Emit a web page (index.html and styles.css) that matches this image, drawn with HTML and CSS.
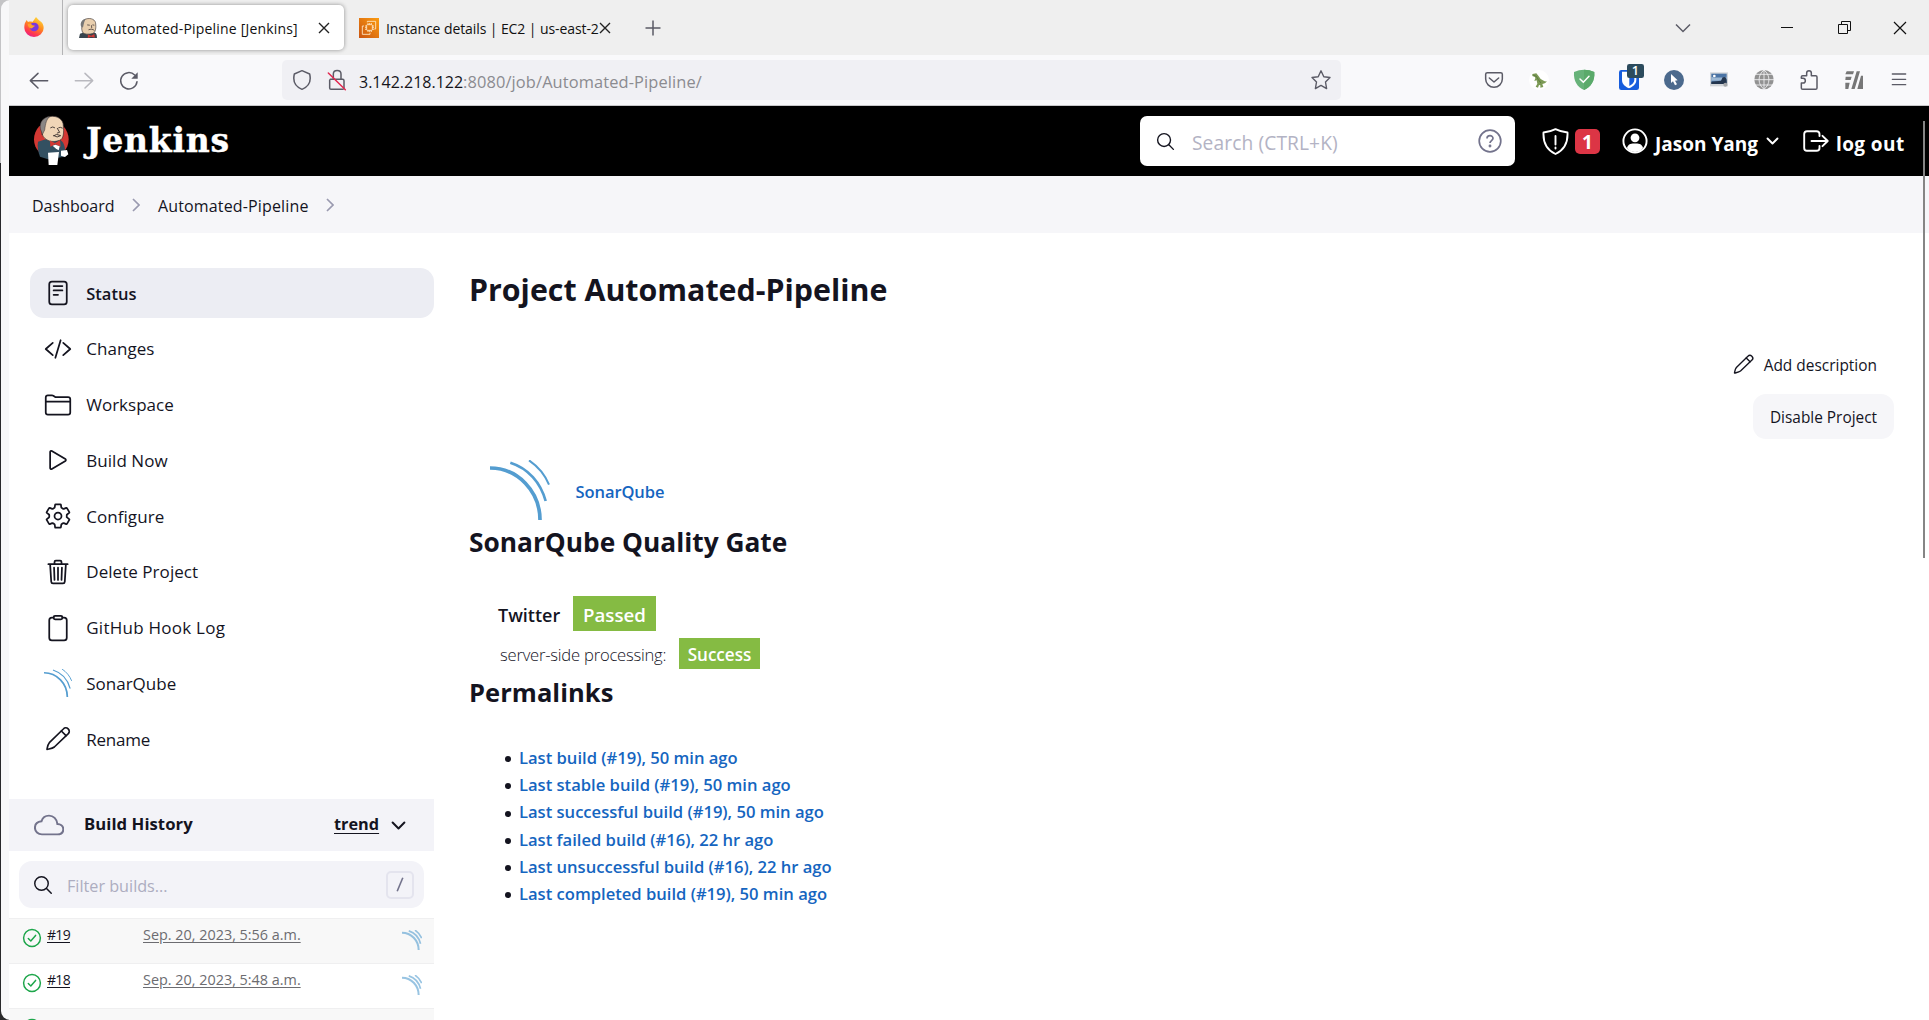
FILE: index.html
```html
<!DOCTYPE html>
<html lang="en">
<head>
<meta charset="utf-8">
<title>Automated-Pipeline [Jenkins]</title>
<link rel="stylesheet" href="styles.css">
</head>
<body>
<svg class="defs" aria-hidden="true">
  <symbol id="sonar" viewBox="120 660 180 180">
    <g fill="none" stroke="#549dd0"><path stroke-width="11" d="M120 684A150 156 0 0 1 270 840"/><path stroke-width="8" d="M181 668C235 685 272 728 287 783"/><path stroke-width="6" d="M237 661C265 680 285 704 297 734"/></g>
  </symbol>
  <symbol id="sonar-small" viewBox="120 660 180 180">
    <g fill="none" stroke="#549dd0" stroke-width="18"><path d="M120 684A150 156 0 0 1 270 840"/><path stroke-width="15" d="M181 668C235 685 272 728 287 783"/><path stroke-width="14" d="M237 661C265 680 285 704 297 734"/></g>
  </symbol>
  <symbol id="pencil" viewBox="131 645 84 84">
    <g fill="none" stroke="currentColor" stroke-width="5" stroke-linejoin="round" stroke-linecap="round"><path d="M140 718C142 708 142 704 147 698L189 657A10 10 0 0 1 204 671L162 711C156 716 150 716 140 718Z"/><path d="M183 663L197 677"/></g>
  </symbol>
  <symbol id="ok" viewBox="0 0 20 20">
    <g fill="none" stroke="#1ea64b" stroke-width="1.5" stroke-linecap="round" stroke-linejoin="round"><circle cx="10" cy="10" r="8.4"/><path d="M6.3 10.5L8.8 13L13.6 7.4"/></g>
  </symbol>
  <symbol id="search" viewBox="0 0 512 512">
    <g fill="none" stroke="currentColor" stroke-width="34" stroke-linecap="round"><circle cx="221" cy="221" r="157"/><path d="M338 338L448 448"/></g>
  </symbol>
</svg>

<div class="window">
  <div class="tabstrip">
    <div class="pinned">
      <svg width="20" height="20" viewBox="71 50 60 60">
        <defs><linearGradient id="fx" x1=".8" y1="0" x2=".3" y2="1"><stop offset="0" stop-color="#ffe23f"/><stop offset=".45" stop-color="#ff8a1e"/><stop offset=".8" stop-color="#ff3750"/><stop offset="1" stop-color="#e5208b"/></linearGradient></defs>
        <path fill="url(#fx)" d="M73 71C74 67 76 65 79 59L83 65C89 63 93 64 96 65C101 59 103 56 107 50C113 57 116 60 122 64C128 69 130 76 130 83A29 27 0 0 1 72 83C72 79 72 75 73 71Z"/>
        <path fill="#7b38dd" d="M88 78C88 72 93 67 101 67C110 67 115 73 115 80S108 93 101 93S88 87 88 78Z"/>
        <path fill="#ffa02a" d="M82 72C89 69 93 71 96 75L104 76C102 80 97 80 95 84C88 85 83 80 82 72Z"/>
      </svg>
    </div>
    <div class="tab tab-active">
      <svg width="18" height="20" viewBox="237 53 55 61">
        <path fill="#38444d" d="M237 114L240 101C248 98 256 97 262 98L283 97C289 98 292 102 292 114Z"/>
        <path fill="#e9cfae" stroke="#443a38" stroke-width="2" d="M248 97C243 86 244 63 258 56C275 51 288 59 288 71C289 80 289 95 280 100C266 104 254 103 248 97Z"/>
        <path fill="#777" d="M243 78C240 65 247 57 258 55C253 62 252 70 249 83Z"/>
        <path fill="none" stroke="#443a38" stroke-width="2.4" d="M262 74L270 75M278 74L284 75M275 75L276 84M266 89C272 86 280 87 284 91"/>
        <path fill="#d33833" d="M264 103L274 107L284 102L285 113L274 110L264 114Z"/>
      </svg>
      <span class="tab-title">Automated-Pipeline [Jenkins]</span>
      <svg class="tab-x" width="12" height="12" viewBox="0 0 12 12"><path d="M1 1L11 11M11 1L1 11"/></svg>
    </div>
    <div class="tab tab-second">
      <svg width="20" height="20" viewBox="0 0 60 60"><defs><linearGradient id="aws" x1="0" y1="1" x2="1" y2="0"><stop offset="0" stop-color="#cb5511"/><stop offset="1" stop-color="#fb9b10"/></linearGradient></defs><rect width="60" height="60" fill="url(#aws)"/><g fill="none" stroke="#ffe9c9" stroke-width="2.6"><rect x="23" y="20" width="17" height="17" rx="2"/><path d="M25 13V10H50V33H46M15 24H10V49H33V44M27 15V20M32 15V20M37 15V20M27 37V42M32 37V42M37 37V42M18 24H23M18 29H23M18 34H23M40 24H45M40 29H45M40 34H45"/></g></svg>
      <span class="tab-title">Instance details | EC2 | us-east-2</span>
      <svg class="tab-x" width="12" height="12" viewBox="0 0 12 12"><path d="M1 1L11 11M11 1L1 11"/></svg>
    </div>
    <svg class="new-tab" width="16" height="16" viewBox="0 0 16 16"><path d="M8 .5V15.5M.5 8H15.5"/></svg>
    <div class="window-buttons">
      <svg width="16" height="10" viewBox="0 0 16 10"><path stroke="#5b5b66" stroke-width="1.5" d="M1 1.5L8 8.5L15 1.5"/></svg>
      <svg width="12" height="12" viewBox="0 0 12 12"><path d="M0 5.5H12"/></svg>
      <svg width="13" height="13" viewBox="0 0 13 13"><path d="M.5 3.5H9.5V12.5H.5ZM3.5 3.5V.5H12.5V9.5H9.5"/></svg>
      <svg width="14" height="14" viewBox="0 0 14 14"><path stroke-width="1.2" d="M1 1L13 13M13 1L1 13"/></svg>
    </div>
  </div>

  <div class="toolbar">
    <div class="nav">
      <svg viewBox="51 195 135 90"><path d="M143 242H92M114 220L91 242L114 264"/></svg>
      <svg viewBox="186 195 135 90" class="dim"><path d="M226 242H277M255 220L278 242L255 264"/></svg>
      <svg viewBox="321 195 135 90"><path d="M411 245A24.500 24.500 0 1 1 404 225"/><path fill="#5b5b66" stroke="none" d="M413 217V236H394Z"/></svg>
    </div>
    <div class="urlbar">
      <svg width="20" height="22" viewBox="876 207 60 66"><path d="M906 212L929 222C934 243 926 260 906 268C886 260 878 243 883 222Z"/></svg>
      <svg width="20" height="22" viewBox="982 207 60 66"><path d="M1001 238V222C1001 208 1024 208 1024 222V238M992 238H1029Q1033 238 1033 242V264Q1033 268 1029 268H994Q990 268 990 264V240"/><path stroke="#e22850" stroke-width="4.500" d="M986 219L1037 269"/></svg>
      <div class="url"><span class="host">3.142.218.122</span><span class="path">:8080/job/Automated-Pipeline/</span></div>
      <svg class="star" width="22" height="22" viewBox="0 0 22 22"><path stroke-width="1.400" d="M11 1.800L13.800 7.700L20 8.500L15.500 13L16.600 19.600L11 16.400L5.400 19.600L6.500 13L2 8.500L8.200 7.700Z"/></svg>
    </div>
    <div class="extensions">
      <svg viewBox="36 30 135 90"><path d="M82 53H122Q127 53 127 58V72A25 25 0 0 1 77 72V58Q77 53 82 53ZM88 69L102 81L116 69"/></svg>
      <svg viewBox="170 30 135 90"><circle cx="236" cy="75" r="30" fill="#fff" stroke="none"/><path fill="#7c9a55" stroke="none" d="M216 57L228 55L234 62L241 72C247 75 252 80 260 79C254 86 248 87 246 87L249 96L240 98L240 91L236 90L233 98L226 95L231 86L229 76L222 78L225 70L224 66L216 63Z"/><path stroke="#4d6b35" stroke-width="2" d="M220 61L228 64L234 74L241 83"/></svg>
      <svg viewBox="305 30 135 90"><path fill="#67b279" stroke="none" d="M341 51Q371 38 402 51C404 78 391 97 371 105C351 97 339 78 341 51Z"/><path fill="#5aaa6a" stroke="none" d="M371 44Q388 44 402 51C404 78 391 97 371 105Z"/><path stroke="#fff" stroke-width="4.500" d="M359 72L369 82L386 64"/></svg>
      <svg viewBox="441 30 135 90"><rect x="477" y="45" width="60" height="60" rx="7" fill="#175ddc" stroke="none"/><path fill="#fff" stroke="none" d="M486 50H529V75C529 88 518 95 507 100C496 95 486 88 486 75Z"/><path fill="#175ddc" stroke="none" d="M508 56H523V75C523 83 516 89 508 93Z"/><rect x="501" y="27" width="51" height="42" rx="7" fill="#2c4b5d" stroke="none"/><text x="526" y="60" class="ext-badge">1</text></svg>
      <svg viewBox="576 30 135 90"><circle cx="642" cy="75" r="30" fill="#4c6a8d" stroke="none"/><path fill="#fff" stroke="none" d="M633 57V84L639 79L645 91L651 88L645 77L653 76Z"/></svg>
      <svg viewBox="710 30 135 90"><path fill="#d2d5d8" stroke="none" d="M749 52H803V94H749Z"/><path fill="#4b74a5" stroke="none" d="M753 56H799V87H753Z"/><path fill="#9db8d3" stroke="none" d="M753 66Q775 70 799 65V77H753Z"/><path fill="#24364e" stroke="none" d="M753 80L782 77L787 67L795 66L799 74V87H753Z"/><circle cx="762" cy="63" r="4" fill="#fff" stroke="none"/><circle cx="795" cy="89" r="6" fill="#a5a7aa" stroke="none"/></svg>
      <svg viewBox="845 30 135 90"><circle cx="911" cy="74" r="29" fill="#929292" stroke="none"/><path stroke="#f3f3f5" stroke-width="2.500" d="M911 45V103M882 74H940M888 58H934M888 90H934M911 45C891 60 891 88 911 103M911 45C931 60 931 88 911 103"/></svg>
      <svg viewBox="983 30 135 90"><path d="M1026 98V84H1031A7 7 0 0 0 1031 70H1026V66Q1026 62 1030 62H1042V54A7 7 0 0 1 1056 54V62H1069Q1073 62 1073 66V99Q1073 103 1069 103H1030Q1026 103 1026 99Z"/></svg>
      <svg viewBox="1116 30 135 90"><path fill="#777" stroke="none" d="M1160 49H1182L1179 58H1156ZM1157 65H1175L1172 75H1156ZM1156 83H1169L1165 102H1156ZM1190 49H1200L1184 102H1174ZM1203 62H1209V102H1192Z"/></svg>
      <svg viewBox="1251 30 135 90"><path stroke-width="4" d="M1297 57H1337M1297 73H1337M1297 89H1337"/></svg>
    </div>
  </div>

  <header class="header">
    <svg width="37" height="52" viewBox="98 345 111 156">
      <ellipse cx="153" cy="418" rx="52" ry="54" fill="#d33833"/>
      <path fill="#335061" d="M113 425L138 417L180 420C194 428 196 450 193 470L143 478L119 470C114 456 110 440 113 425Z"/>
      <path fill="#fff" d="M143 458L176 456L171 495L145 495ZM182 452L200 450L204 463L194 471L182 467Z"/>
      <path fill="#f0d6b7" stroke="#3b3030" stroke-width="2" d="M126 404C118 380 125 355 148 350C172 345 190 360 189 378C191 397 190 417 178 421C157 429 133 423 126 404Z"/>
      <path fill="#8a8785" stroke="#3b3030" stroke-width="1.500" d="M120 386C117 366 129 352 149 349C138 358 136 369 133 390L127 402Z"/>
      <path fill="none" stroke="#2b2424" stroke-width="2.500" d="M151 383Q157 378 163 383M175 383Q180 380 186 384M171 385L178 397L171 399M160 407Q168 399 181 407Q171 415 160 407"/>
      <path fill="#d33833" d="M149 422L164 429L179 421L181 440L165 433L150 440Z"/>
      <path fill="#fff" d="M157 437L165 434L178 439L175 451L167 446Z"/>
    </svg>
    <span class="brand">Jenkins</span>
    <div class="search-box">
      <svg width="21" height="21"><use href="#search"/></svg>
      <span>Search (CTRL+K)</span>
      <svg width="24" height="24" viewBox="0 0 24 24" class="help"><circle cx="12" cy="12" r="10.800"/><path d="M9 9.500C9 5.800 15 5.800 15 9.300C15 11.500 12 11.700 12 14"/><circle cx="12" cy="17" r=".6"/></svg>
    </div>
    <svg class="warn" width="27" height="27" viewBox="0 0 27 27"><path d="M13.500 1.200Q19 4 25.500 4.500C26 15 22 22 13.500 26C5 22 1 15 1.500 4.500Q8 4 13.500 1.200ZM13.500 8V16.500M13.500 19.500V20.500"/></svg>
    <span class="count">1</span>
    <svg class="person" width="26" height="26" viewBox="0 0 26 26"><circle cx="13" cy="13" r="11.600"/><circle cx="13" cy="9.800" r="4.400" fill="#fff" stroke="none"/><path fill="#fff" stroke="none" d="M5 20C6 15.500 10 15.500 13 15.500S20 15.500 21 20Q18 24 13 24T5 20Z"/></svg>
    <span class="user">Jason Yang</span>
    <svg class="caret" width="13" height="8" viewBox="0 0 13 8"><path d="M1.500 1.500L6.500 6.500L11.500 1.500"/></svg>
    <svg class="exit" width="26" height="22" viewBox="0 0 26 22"><path d="M16.500 6V4Q16.500 1.200 13.500 1.200H4Q1.200 1.200 1.200 4V18Q1.200 20.800 4 20.800H13.500Q16.500 20.800 16.500 18V16M8.500 11H24.500M19.500 5.800L24.700 11L19.500 16.200"/></svg>
    <span class="logout">log out</span>
  </header>

  <nav class="crumbs">
    <span class="c1">Dashboard</span>
    <svg width="8" height="14" viewBox="0 0 8 14"><path d="M1 1L7 7L1 13"/></svg>
    <span class="c2">Automated-Pipeline</span>
    <svg width="8" height="14" viewBox="0 0 8 14"><path d="M1 1L7 7L1 13"/></svg>
  </nav>

  <div class="page">
    <aside class="side">
      <ul class="tasks">
        <li class="current"><svg viewBox="0 0 512 512"><rect x="96" y="48" width="320" height="416" rx="48"/><path d="M176 128H336M176 208H336M176 288H256"/></svg>Status</li>
        <li><svg viewBox="0 0 512 512"><path d="M160 368L32 256l128-112M352 368l128-112-128-112M304 96l-96 320"/></svg>Changes</li>
        <li class="tight"><svg viewBox="0 0 512 512"><path d="M440 432H72a40 40 0 01-40-40V120a40 40 0 0140-40h75.890a40 40 0 0122.190 6.720l27.840 18.560a40 40 0 0022.190 6.720H440a40 40 0 0140 40v240a40 40 0 01-40 40zM32 192h448"/></svg>Workspace</li>
        <li><svg viewBox="0 0 512 512"><path d="M112 111v290c0 17.440 17 28.520 31 20.160l247.900-148.370c12.120-7.250 12.120-26.330 0-33.580L143 90.840c-14-8.360-31 2.720-31 20.160z"/></svg>Build Now</li>
        <li><svg viewBox="0 0 512 512"><circle cx="256" cy="256" r="64"/><path d="M416.390 256a154.340 154.340 0 01-1.530 20.790l45.210 35.460a10.810 10.810 0 012.450 13.750l-42.770 74a10.810 10.810 0 01-13.140 4.590l-44.900-18.080a16.110 16.110 0 00-15.170 1.750A164.480 164.480 0 01325 400.800a15.940 15.940 0 00-8.820 12.140l-6.730 47.890a11.080 11.080 0 01-10.680 9.170h-85.540a11.110 11.110 0 01-10.690-8.870l-6.720-47.820a16.070 16.070 0 00-9-12.220 155.300 155.300 0 01-21.460-12.570 16 16 0 00-15.110-1.710l-44.890 18.070a10.810 10.810 0 01-13.140-4.580l-42.770-74a10.800 10.800 0 012.450-13.750l38.210-30a16.050 16.050 0 006-14.080c-.36-4.170-.58-8.330-.58-12.500s.21-8.270.58-12.350a16 16 0 00-6.070-13.940l-38.190-30A10.810 10.810 0 0149.480 186l42.770-74a10.810 10.810 0 0113.140-4.590l44.900 18.080a16.110 16.110 0 0015.170-1.750A164.480 164.480 0 01187 111.200a15.940 15.940 0 008.820-12.140l6.730-47.890A11.080 11.080 0 01213.230 42h85.540a11.110 11.110 0 0110.690 8.870l6.720 47.820a16.070 16.070 0 009 12.220 155.300 155.300 0 0121.460 12.570 16 16 0 0015.110 1.710l44.890-18.070a10.810 10.810 0 0113.140 4.580l42.770 74a10.800 10.800 0 01-2.450 13.750l-38.210 30a16.050 16.050 0 00-6.050 14.080c.33 4.140.55 8.300.55 12.470z"/></svg>Configure</li>
        <li><svg viewBox="0 0 512 512"><path d="M112 112l20 320c.95 18.490 14.400 32 32 32h184c17.670 0 30.870-13.510 32-32l20-320M80 112h352M192 112V72a24 24 0 0124-24h80a24 24 0 0124 24v40M256 176v224M184 176l8 224M328 176l-8 224"/></svg>Delete Project</li>
        <li class="wide"><svg viewBox="0 0 512 512"><path d="M336 64h32a48 48 0 0148 48v320a48 48 0 01-48 48H144a48 48 0 01-48-48V112a48 48 0 0148-48h32"/><rect x="176" y="32" width="160" height="64" rx="26"/></svg>GitHub Hook Log</li>
        <li class="tight"><svg><use href="#sonar"/></svg>SonarQube</li>
        <li class="tighter"><svg><use href="#pencil"/></svg>Rename</li>
      </ul>
      <div class="history-head">
        <svg width="30" height="30" viewBox="0 0 512 512"><path fill="none" stroke="#73738c" stroke-width="34" d="M400 240c-8.890-89.540-71-144-144-144-69 0-113.440 48.200-128 96-60 6-112 43.590-112 112 0 66 54 112 120 112h260c55 0 104-27.460 104-88 0-59.820-53-85.760-100-88z"/></svg>
        <span class="history-title">Build History</span>
        <a class="trend">trend</a>
        <svg width="21" height="21" viewBox="0 0 512 512"><path fill="none" stroke="#14141f" stroke-width="48" stroke-linecap="round" stroke-linejoin="round" d="M112 184l144 144 144-144"/></svg>
      </div>
      <div class="filter">
        <svg width="22" height="22"><use href="#search"/></svg>
        <span>Filter builds...</span>
        <kbd><svg width="8" height="15" viewBox="0 0 8 15"><path stroke="#73738c" stroke-width="1.600" d="M6.800 .7L1.200 14.300"/></svg></kbd>
      </div>
      <div class="build odd"><svg width="20" height="20"><use href="#ok"/></svg><a class="num">#19</a><a class="date">Sep. 20, 2023, 5:56 a.m.</a><svg class="mini" width="20" height="20"><use href="#sonar-small"/></svg></div>
      <div class="build"><svg width="20" height="20"><use href="#ok"/></svg><a class="num">#18</a><a class="date">Sep. 20, 2023, 5:48 a.m.</a><svg class="mini" width="20" height="20"><use href="#sonar-small"/></svg></div>
      <div class="build odd"><svg width="20" height="20"><use href="#ok"/></svg></div>
    </aside>

    <main class="main">
      <h1>Project Automated-Pipeline</h1>
      <div class="actions">
        <div class="describe"><svg width="23" height="23"><use href="#pencil"/></svg>Add description</div>
        <button class="disable">Disable Project</button>
      </div>
      <div class="sonar-row"><svg width="60" height="60"><use href="#sonar"/></svg><a>SonarQube</a></div>
      <h2>SonarQube Quality Gate</h2>
      <div class="gate"><span class="gate-name">Twitter</span><span class="pill">Passed</span></div>
      <div class="server"><span class="server-name">server-side processing:</span><span class="pill">Success</span></div>
      <h2 class="perma">Permalinks</h2>
      <ul class="links">
        <li><a>Last build (#19), 50 min ago</a></li>
        <li><a>Last stable build (#19), 50 min ago</a></li>
        <li><a>Last successful build (#19), 50 min ago</a></li>
        <li><a>Last failed build (#16), 22 hr ago</a></li>
        <li><a>Last unsuccessful build (#16), 22 hr ago</a></li>
        <li><a>Last completed build (#19), 50 min ago</a></li>
      </ul>
    </main>
  </div>
  <div class="scrollbar"></div>
</div>
</body>
</html>
```
FILE: styles.css
```css
* { box-sizing: border-box; }
body {
  margin: 0; height: 1020px; overflow: hidden; padding-left: 1px;
  background: linear-gradient(#c4c4c6 163px, #29292b 163px);
  font-family: "Open Sans", "Noto Sans", sans-serif; color: #14141f;
}
svg { flex: none; display: block; }
ul { list-style: none; margin: 0; padding: 0; }
.defs { display: none; }
.window {
  position: relative; display: flex; flex-direction: column; height: 1020px; overflow: hidden;
  padding-left: 8px; background: #f8f8f9; border-radius: 9px 0 0 9px;
}

/* Browser tabs */
.tabstrip { display: flex; align-items: center; flex: none; height: 55px; background: #efefef; }
.pinned { width: 54px; height: 55px; padding: 17px 0 0 15px; border-right: 1px solid #b4b4b6; }
.tab { display: flex; align-items: center; font-size: 14px; color: #111; white-space: nowrap; }
.tab-title { padding-top: 2px; line-height: 20px; }
.tab-active {
  width: 276px; height: 45px; margin-left: 5px; padding: 0 14px 0 11px; border-radius: 5px;
  background: #fff; box-shadow: 0 0 4px rgba(0, 0, 0, .4);
}
.tab-active .tab-title { margin-left: 7px; letter-spacing: .19px; }
.tab-active .tab-x { margin-left: auto; }
.tab-second { margin-left: 15px; }
.tab-second .tab-title { width: 213px; margin-left: 7px; letter-spacing: -.09px; }
.tab-x { fill: none; stroke: #222; stroke-width: 1.4; }
.new-tab { margin-left: 34px; fill: none; stroke: #5b5b66; stroke-width: 1.5; }
.window-buttons { display: flex; align-items: center; margin-left: auto; padding-right: 22px; fill: none; stroke: #111; }
.window-buttons svg:nth-child(2) { margin-left: 90px; }
.window-buttons svg:nth-child(3) { margin-left: 45px; }
.window-buttons svg:nth-child(4) { margin-left: 42px; }

/* Address bar */
.toolbar {
  display: flex; align-items: center; flex: none; height: 51px; background: #f9f9fb;
  border-bottom: 1px solid #c8c8ca;
}
.toolbar svg { fill: none; stroke: #5b5b66; stroke-width: 4.5; stroke-linecap: round; stroke-linejoin: round; }
.nav { display: flex; padding-left: 7.5px; }
.nav svg, .extensions svg { width: 45px; height: 30px; overflow: visible; }
.nav .dim { stroke: #b9b9bf; }
.urlbar {
  display: flex; align-items: center; width: 1059px; height: 40px; margin-left: 130.500px; padding: 0 9px 0 10px;
  border-radius: 5px; background: #f0f0f4;
}
.urlbar svg + svg { margin-left: 15px; }
.url { padding-top: 3px; margin-left: 12px; font-size: 16px; line-height: 24px; color: #15141a; }
.path { font-size: 16.400px; letter-spacing: .12px; color: #8b8b90; }
.urlbar .star { margin-left: auto; }
.extensions { display: flex; margin-left: 130.500px; }
.toolbar .ext-badge { fill: #fff; stroke: none; font-size: 38px; font-weight: 600; text-anchor: middle; }

/* Jenkins header */
.header { display: flex; align-items: center; flex: none; height: 70px; padding-left: 24px; background: #000; color: #fff; }
.header > svg { fill: none; stroke: #fff; stroke-width: 1.9; stroke-linecap: round; stroke-linejoin: round; }
.header > svg:first-child { stroke: none; }
.brand {
  width: 146px; margin-left: 16px; padding-bottom: 1px; font: 700 33px/44px "DejaVu Serif", serif;
  letter-spacing: .75px; -webkit-text-stroke: .4px #fff;
}
.search-box {
  display: flex; align-items: center; width: 375px; height: 50px; margin-left: 908px; padding: 0 13px 0 15px;
  border-radius: 7px; background: #fff; color: #14141f;
}
.search-box span { margin-left: 16px; padding-top: 3px; font-size: 19.200px; line-height: 26px; letter-spacing: .1px; color: #b3b3c4; }
.search-box .help { margin-left: auto; fill: none; stroke: #73738c; stroke-width: 1.700; }
.warn { margin-left: 27px; }
.count {
  width: 25px; height: 25px; margin-left: 6px; border-radius: 5px; background: #dc3545;
  font-size: 19px; font-weight: 700; line-height: 27px; text-align: center;
}
.person { margin-left: 22px; }
.user { width: 105px; margin-left: 7px; padding-top: 5px; font-size: 19px; font-weight: 700; line-height: 26px; white-space: nowrap; }
.caret { margin-left: 6px; }
.exit { margin-left: 24px; }
.logout { margin-left: 7px; padding-top: 5px; font-size: 19px; font-weight: 700; line-height: 26px; letter-spacing: .4px; }

.crumbs { display: flex; align-items: center; flex: none; height: 57px; padding-left: 23px; background: #f6f6f9; font-size: 16px; }
.crumbs span { padding-top: 3px; line-height: 24px; }
.crumbs svg { margin-left: 16px; fill: none; stroke: #9a9ab0; stroke-width: 1.700; }
.crumbs .c1 { width: 84px; }
.crumbs .c2 { width: 152px; margin-left: 18px; letter-spacing: .15px; }

.page { display: flex; flex: 1; min-height: 0; background: #fff; }
.side { width: 425px; flex: none; }

/* Side navigation */
.tasks { display: flex; flex-direction: column; gap: 5.750px; padding: 35px 0 0 21px; }
.tasks li { display: flex; align-items: center; gap: 14.500px; height: 50px; padding-left: 13.750px; border-radius: 14px; font-size: 17px; letter-spacing: .05px; }
.tasks svg { width: 28px; height: 28px; fill: none; stroke: currentColor; stroke-width: 32; stroke-linecap: round; stroke-linejoin: round; }
.tasks .current { background: #ecedf3; font-size: 16.500px; font-weight: 600; letter-spacing: 0; }
.tasks .tight { letter-spacing: 0; }
.tasks .tighter { letter-spacing: -.25px; }
.tasks .wide { letter-spacing: .25px; }

/* Build history */
.history-head { display: flex; align-items: center; height: 52px; margin-top: 35px; padding-left: 25px; background: #f3f3f8; font-weight: 700; }
.history-title { width: 250px; margin: -3px 0 0 20px; font-size: 16.700px; letter-spacing: .05px; }
.trend { width: 45px; margin-top: -3px; font-size: 16.300px; text-decoration: underline; text-underline-offset: 3px; }
.history-head svg:last-child { margin-left: 9px; }
.filter { display: flex; align-items: center; height: 47px; margin: 10px 10px 10px; padding: 0 10px 0 13px; border-radius: 13px; background: #f3f3f8; }
.filter span { margin-left: 13px; padding-top: 2px; font-size: 16.200px; color: #adadc0; }
.filter kbd { display: flex; align-items: center; justify-content: center; width: 28px; height: 28px; margin-left: auto; border: 2px solid #e4e4ee; border-radius: 5px; }
.build { display: flex; align-items: flex-start; height: 45px; padding: 9px 12px 0 13px; border-top: 1px solid #efeff0; font-size: 14px; color: #14141f; }
.build.odd { background: #f8f8f8; }
.build a { margin-top: -5px; line-height: 24px; text-decoration: underline; text-underline-offset: 2px; }
.build .num { width: 96px; margin-left: 5px; letter-spacing: -.7px; }
.build .date { color: #6c6c70; font-size: 14.400px; }
.build .mini { margin: 2px 0 0 auto; opacity: .6; }

/* Project page */
.main { display: flex; flex-direction: column; align-items: flex-start; flex: 1; padding: 37px 35px 0 35px; }
h1 { margin: 0; font-size: 30.350px; line-height: 40px; }
h2 { margin: 4px 0 0; font-size: 26.300px; line-height: 36px; }
.actions { display: flex; flex-direction: column; align-items: flex-end; align-self: stretch; margin-top: 40px; }
.describe { display: flex; align-items: center; gap: 8.500px; height: 30px; padding-right: 17px; font-size: 15.450px; }
.describe svg { margin-top: -2px; }
.disable {
  width: 141px; height: 45px; margin-top: 14px; padding: 2px 0 0; border: 0; border-radius: 13px; background: #f6f6f9;
  color: inherit; font: 15.400px "Open Sans", sans-serif;
}
.sonar-row { display: flex; align-items: center; gap: 25.500px; margin: 21px 0 0 21px; }
.sonar-row a { padding-top: 3px; font-size: 16.500px; font-weight: 600; letter-spacing: -.08px; color: #1565c0; }
.gate { display: flex; align-items: center; height: 35px; margin: 36px 0 0 29px; font-size: 18px; font-weight: 600; }
.gate-name { width: 75px; padding-top: 2px; }
.pill { background: #85bb43; color: #fff; font-weight: 600; }
.gate .pill { width: 83px; height: 35px; font-size: 18.700px; line-height: 37px; text-align: center; }
.server { display: flex; align-items: center; height: 31px; margin: 7px 0 0 31px; }
.server-name { width: 179px; padding-top: 1px; font-size: 16.600px; font-weight: 300; letter-spacing: -.22px; }
.server .pill { width: 81px; height: 31px; font-size: 17.100px; line-height: 34px; text-align: center; }
.perma { margin-top: 5px; font-size: 25.500px; letter-spacing: .05px; }
.links { margin-top: 34px; padding-left: 35px; font-size: 16.600px; line-height: 27.200px; }
.links li { display: flex; align-items: center; gap: 8px; }
.links li::before { content: ""; width: 6px; height: 6px; margin: 3px 0 0 1px; border-radius: 50%; background: #14141f; }
.links a { font-weight: 600; letter-spacing: -.01px; color: #1565c0; }

.scrollbar { position: absolute; top: 121px; right: 4px; width: 2px; height: 437px; background: #858585; }
```
